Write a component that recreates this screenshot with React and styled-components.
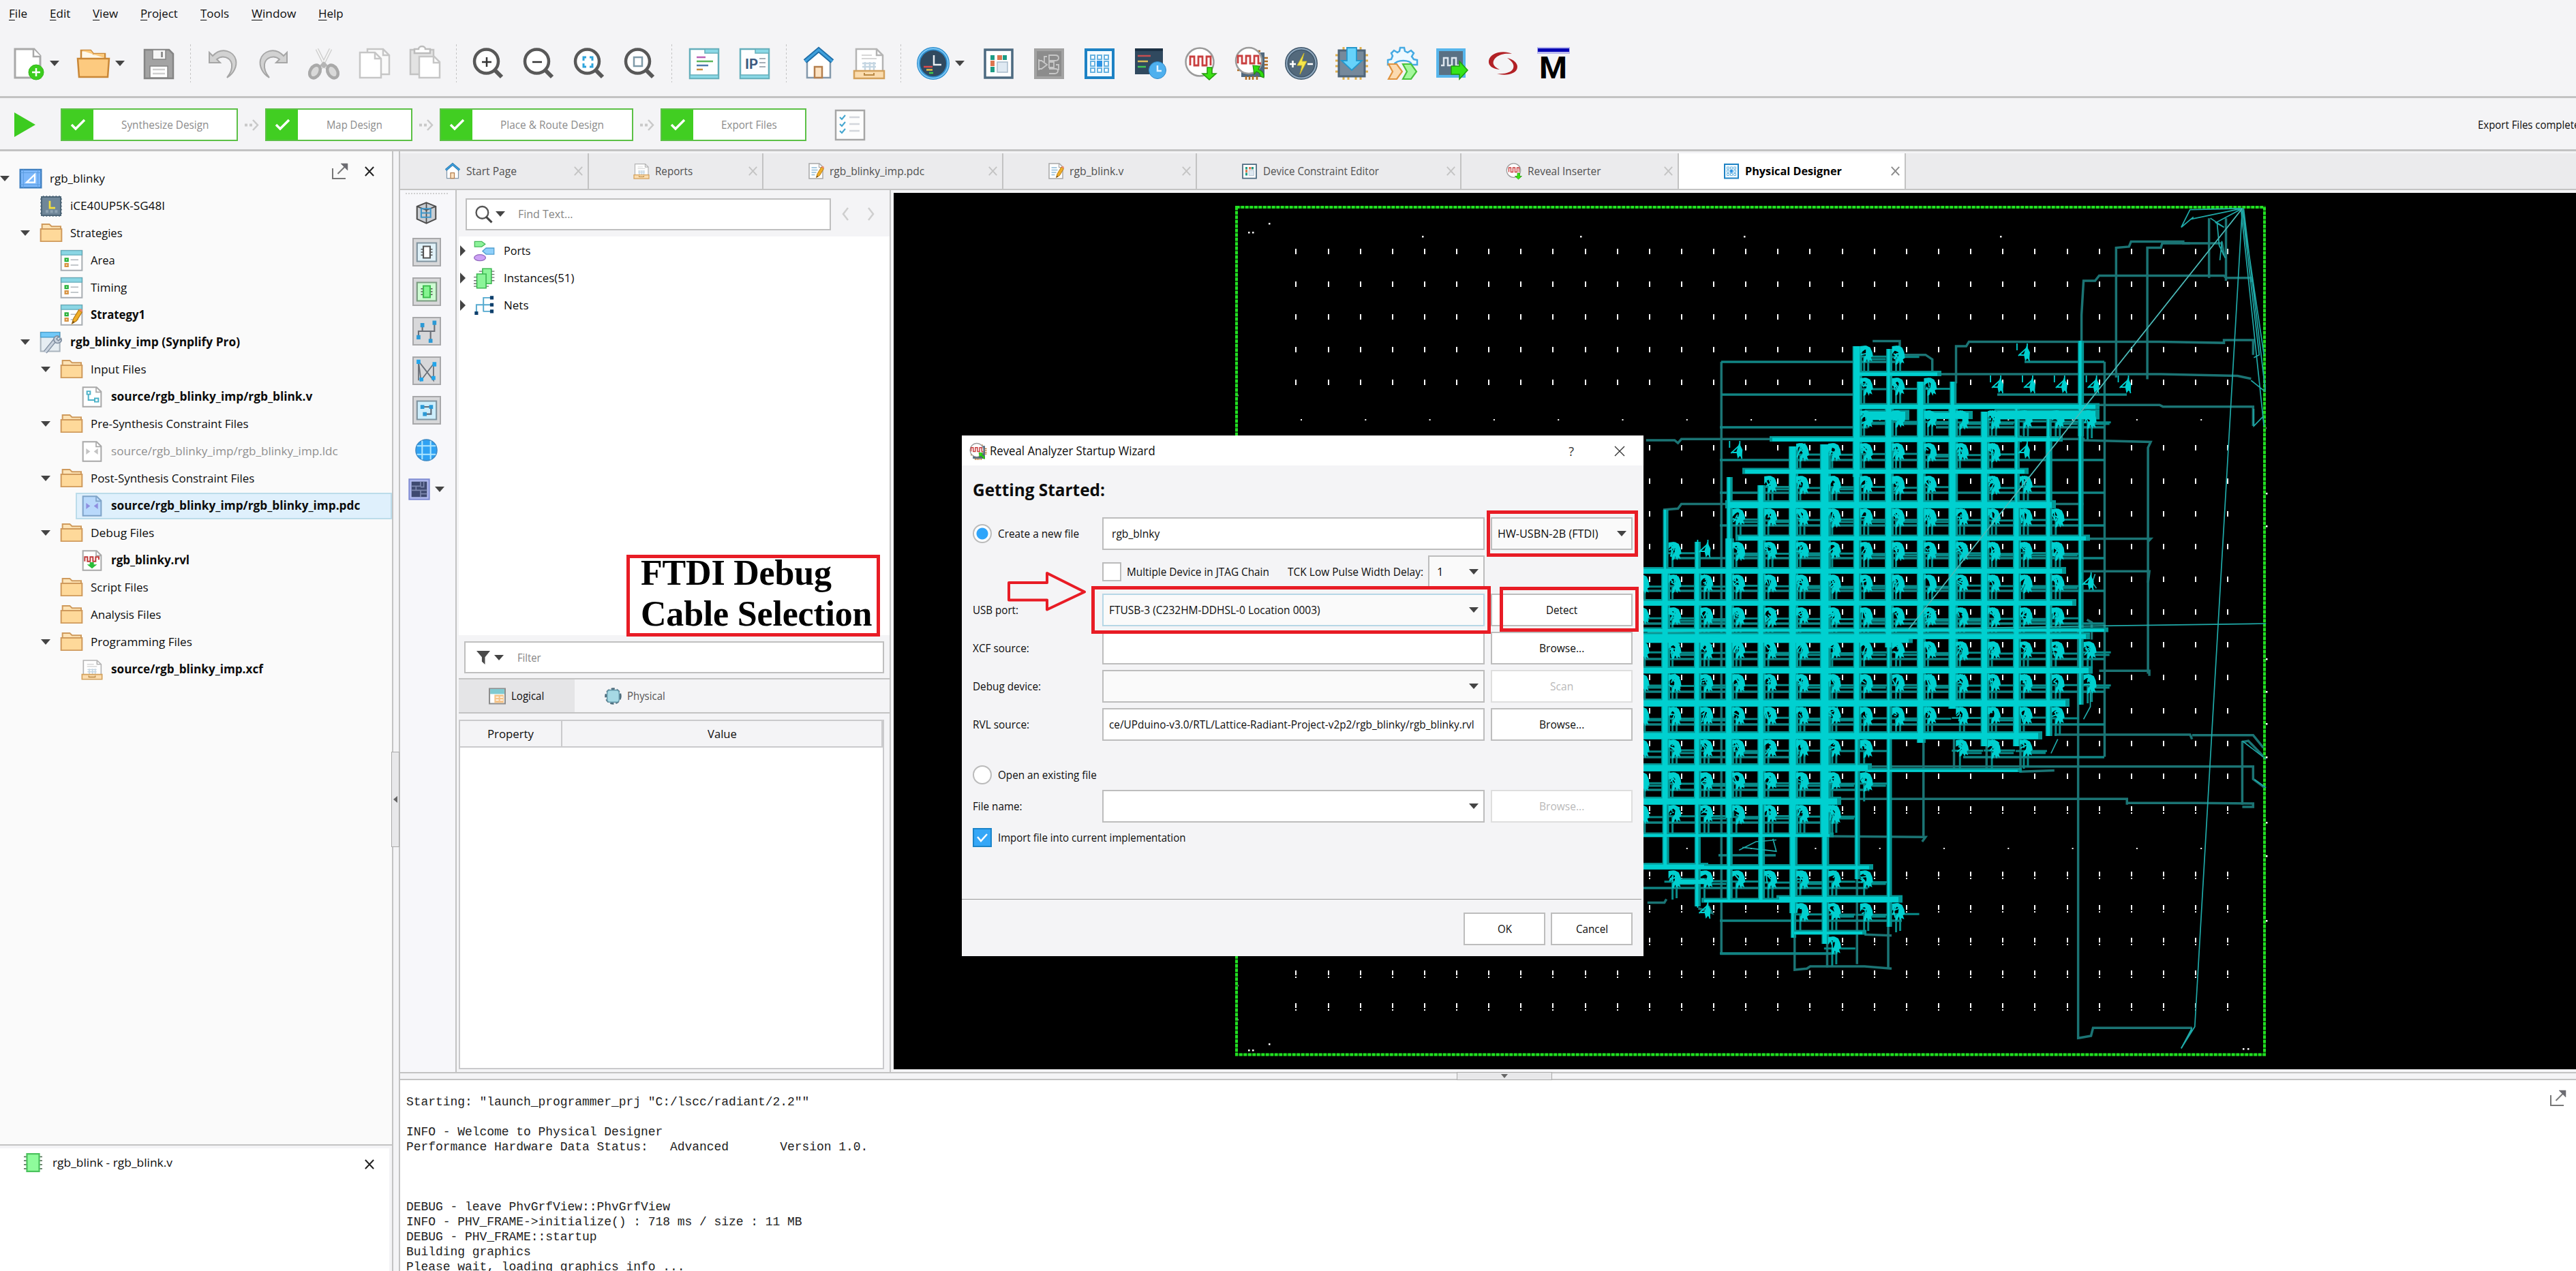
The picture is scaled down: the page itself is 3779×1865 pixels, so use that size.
import React, { useLayoutEffect, useRef, useState } from "react";
import styled, { createGlobalStyle, css } from "styled-components";

const LINE = "#c3c3c3";
const PANEL = "#f4f4f6";
const RED = "#e81c25";
const CYAN = "#00d0d0";
const DIM = "#1b7474";

const Global = createGlobalStyle`
  *, *::before, *::after { box-sizing: border-box; }
  body { margin: 0; background: ${PANEL}; font-family: "Open Sans", "Noto Sans", sans-serif; font-size: 16px; color: #111; }
`;

/* ---------- text ---------- */

const TextBox = styled.span`
  display: inline-block;
  flex: none;
  white-space: pre;
  text-align: left;
  line-height: 1.25;
  width: ${(p) => (p.$w ? `${p.$w}px` : "auto")};
  font-size: ${(p) => p.$size || 16.5}px;
  font-weight: ${(p) => (p.$bold ? 700 : 400)};
  color: ${(p) => p.$color || "#0c0c0c"};
`;

const TextRun = styled.span`
  display: inline-block;
  transform-origin: 0 50%;
  ${(p) => p.$mnemonic && css`
    &::first-letter { text-decoration: underline; text-underline-offset: 3px; }
  `}
`;

/* Condenses the run so that the label fills the width it is given. */
function Label({ w, size, bold, color, mnemonic, children }) {
  const ref = useRef(null);
  const [scale, setScale] = useState(1);
  useLayoutEffect(() => {
    if (w) setScale(w / ref.current.offsetWidth);
  }, [w, children]);
  return (
    <TextBox $w={w} $size={size} $bold={bold} $color={color}>
      <TextRun ref={ref} $mnemonic={mnemonic} style={{ transform: `scaleX(${scale})` }}>
        {children}
      </TextRun>
    </TextBox>
  );
}

const Caret = styled.i`
  flex: none;
  width: 0;
  height: 0;
  border-left: 7.5px solid transparent;
  border-right: 7.5px solid transparent;
  border-top: 8px solid #444;
  ${(p) => p.$right && css`
    border-left: 8px solid #444;
    border-right: 0;
    border-top: 8px solid transparent;
    border-bottom: 8px solid transparent;
  `}
`;

/* ---------- icons ---------- */

const Svg = styled.svg`
  display: block;
  flex: none;
  overflow: visible;
  width: ${(p) => p.$s || 48}px;
  height: ${(p) => p.$h || p.$s || 48}px;
`;

const wave = "M9 27v-13h6v13h6v-13h6v13h6v-13h6v13";

const art = {
  newDoc: (
    <>
      <path d="M5 3h28l9 10v32H5z" fill="#fff" stroke="#a9a9a9" strokeWidth="3" />
      <path d="M32 3v11h11" fill="#fff" stroke="#a9a9a9" strokeWidth="2.5" />
      <circle cx="36" cy="37" r="11" fill="#3ccd1e" stroke="#35b61b" />
      <path d="M36 31v12M30 37h12" stroke="#fff" strokeWidth="2.5" />
    </>
  ),
  folder: (
    <>
      <path d="M6 18V5h14l4 5h17v10" fill="#fff8e8" stroke="#c98737" strokeWidth="2.5" />
      <path d="M6 5h14l4 5h16v6L22 10z" fill="#fcca7d" />
      <path d="M1 17h46l-2 27H3z" fill="#fdca7f" stroke="#c98737" strokeWidth="2.5" />
    </>
  ),
  save: (
    <>
      <path d="M3 4h36l6 6v36H3z" fill="#a3a3a3" stroke="#858585" strokeWidth="2.5" />
      <path d="M15 4h19v14H15z" fill="#f6f6f6" stroke="#858585" strokeWidth="1.5" />
      <path d="M27 7h3v8h-3z" fill="#8f8f8f" />
      <path d="M11 28h26v17H11z" fill="#fff" stroke="#858585" strokeWidth="1.5" />
      <path d="M15 33h18M15 39h18" stroke="#cfcfcf" strokeWidth="2.5" />
    </>
  ),
  undo: (
    <path d="M4 8v15h16l-5-5c8-7 20-3 22 7 1 8-2 14-7 20 10-6 15-17 13-26C40 6 22-1 9 13z" fill="#d2d2d2" stroke="#a6a6a6" strokeWidth="2" />
  ),
  cut: (
    <>
      <path d="M14 3l14 28M34 3L20 31" stroke="#cfcfcf" strokeWidth="5" />
      <path d="M14 3l14 28M34 3L20 31" stroke="#f6f6f6" strokeWidth="2" />
      <ellipse cx="11" cy="36" rx="7" ry="10" transform="rotate(30 11 36)" fill="#d9d9d9" stroke="#a9a9a9" strokeWidth="4.500" />
      <ellipse cx="37" cy="36" rx="7" ry="10" transform="rotate(-30 37 36)" fill="#d9d9d9" stroke="#a9a9a9" strokeWidth="4.500" />
      <path d="M18 27l6-6 6 6-6 4z" fill="#b5b5b5" />
    </>
  ),
  copy: (
    <>
      <path d="M14 3h23l9 9v28H14z" fill="#fafafa" stroke="#c6c6c6" strokeWidth="2.5" />
      <path d="M3 8h22l9 9v28H3z" fill="#fff" stroke="#c6c6c6" strokeWidth="2.5" />
      <path d="M25 8v9h9M37 3v9h9" fill="none" stroke="#c6c6c6" strokeWidth="2.5" />
    </>
  ),
  paste: (
    <>
      <path d="M3 4h34v36H3z" fill="#e3e3e3" stroke="#c2c2c2" strokeWidth="2.5" />
      <path d="M9 3h6a5 4 0 0 1 10 0h7v6H9z" fill="#fff" stroke="#bcbcbc" strokeWidth="2.5" />
      <path d="M16 14h22l8 8v23H16z" fill="#fff" stroke="#c6c6c6" strokeWidth="2.5" />
      <path d="M37 14v9h9" fill="none" stroke="#c6c6c6" strokeWidth="2.5" />
    </>
  ),
  zoomIn: <path d="M21 15v14M14 22h14" stroke="#333" strokeWidth="2.5" />,
  zoomOut: <path d="M14 22h14" stroke="#333" strokeWidth="2.5" />,
  zoomFit: <path d="M15 20v-5h4M24 15h4v5M28 24v5h-4M19 29h-4v-5" fill="none" stroke="#2ea4dc" strokeWidth="3" />,
  zoomSel: <path d="M15 15h12v13H15z" fill="#fff" stroke="#7f9aa8" strokeWidth="2.5" />,
  source: (
    <>
      <path d="M3 3h42v43H3z" fill="#fdfeff" stroke="#65aebb" strokeWidth="2.5" />
      <path d="M25 3h20v6H25zM3 41h42v5H3z" fill="#8ad8e6" stroke="#65aebb" strokeWidth="1.5" />
      <path d="M13 15h13" stroke="#bb62b4" strokeWidth="2.5" />
      <path d="M13 21h24" stroke="#5bb559" strokeWidth="2.5" />
      <path d="M13 27h17" stroke="#4e79ad" strokeWidth="2.5" />
      <path d="M13 33h9" stroke="#c98c3c" strokeWidth="2.5" />
    </>
  ),
  ip: (
    <>
      <path d="M3 3h42v43H3z" fill="#fdfeff" stroke="#65aebb" strokeWidth="2.5" />
      <path d="M25 3h20v6H25zM3 41h42v5H3z" fill="#8ad8e6" stroke="#65aebb" strokeWidth="1.5" />
      <text x="10" y="32" fontFamily="Roboto, sans-serif" fontWeight="700" fontSize="21" fill="#3c5a80" textLength="19" lengthAdjust="spacingAndGlyphs">IP</text>
      <path d="M31 17h9M31 23h9M31 29h9" stroke="#a5aeb6" strokeWidth="2.2" />
    </>
  ),
  home: (
    <>
      <path d="M7 20L24 5l17 15v25H7z" fill="#fff" stroke="#8398ab" strokeWidth="2.5" />
      <path d="M18 29h11v16H18z" fill="#fde3c3" stroke="#b57f4e" strokeWidth="2.5" />
      <path d="M4 21L24 4l20 17" fill="none" stroke="#1f6ea8" strokeWidth="7" />
      <path d="M4 21L24 4l20 17" fill="none" stroke="#3fa0dc" strokeWidth="3.5" />
    </>
  ),
  report: (
    <>
      <path d="M5 3h30l9 9v26H5z" fill="#fff" stroke="#b4b4b4" strokeWidth="2.5" />
      <path d="M35 3v9h9" fill="none" stroke="#b4b4b4" strokeWidth="2.5" />
      <path d="M13 12h15M13 17h22" stroke="#d7d7d7" strokeWidth="2" />
      <path d="M14 24h20M14 29h20M18 22v12M25 22v12M31 22v12" stroke="#c5d6e2" strokeWidth="2.5" />
      <path d="M2 35h44v11H2z" fill="#fbdcae" stroke="#d3a15c" strokeWidth="2.5" />
      <path d="M17 38v3h14v-3" fill="none" stroke="#b98945" strokeWidth="2" />
    </>
  ),
  clock: (
    <>
      <circle cx="24" cy="24" r="21.5" fill="#30495f" stroke="#2b8bcb" strokeWidth="5" />
      <circle cx="24" cy="24" r="21.8" fill="none" stroke="#7cc7f5" strokeWidth="2" />
      <path d="M25 12v14h11" fill="none" stroke="#e9eef2" strokeWidth="2.5" />
      <path d="M10 29h13" stroke="#de4b4b" strokeWidth="2.5" />
      <path d="M14 33.500h9" stroke="#e8c34b" strokeWidth="2.5" />
      <path d="M18 38h6" stroke="#3fce4b" strokeWidth="2.5" />
    </>
  ),
  constraint: (
    <>
      <path d="M4 4h40v41H4z" fill="#fff" stroke="#4c6a80" strokeWidth="3.500" />
      <path d="M12 12h6v7h-6zM30 12h6v7h-6zM12 29h6v8h-6z" fill="#1f9c85" />
      <path d="M22 12h7v7h-7zM12 20h6v8h-6z" fill="#dd7650" />
      <path d="M22 22h15v15H22z" fill="#dfe9f2" stroke="#a9bccb" strokeWidth="1.500" />
    </>
  ),
  netlist: (
    <>
      <path d="M4 4h40v41H4z" fill="#8c8c8c" stroke="#a2a2a2" strokeWidth="4" />
      <path d="M9 20h4l8 6-8 6H9M9 18v16M24 12h9q5 0 5 4t-5 4h-9zM24 22h7v8h-7zM24 32h9q4 0 4 3t-4 4h-9M34 26h4v8M21 14h-4v10" fill="none" stroke="#c7c7c7" strokeWidth="1.800" />
    </>
  ),
  physical: (
    <>
      <path d="M4 4h40v41H4z" fill="#f4fbff" stroke="#1d82c4" strokeWidth="4" />
      <path d="M11 12h6v6h-6zM21 12h6v6h-6zM31 12h6v6h-6zM11 21h6v7h-6zM31 21h6v7h-6zM11 31h6v6h-6zM21 31h6v6h-6zM31 31h6v6h-6z" fill="#fff" stroke="#67b2e0" strokeWidth="2" />
      <path d="M20 20h8v9h-8z" fill="#2e93e3" />
    </>
  ),
  timing: (
    <>
      <path d="M2 2h41v38H2z" fill="#30495f" />
      <path d="M2 2h41v4H2z" fill="#1c3144" />
      <path d="M6 13h19" stroke="#c74f52" strokeWidth="2.500" />
      <path d="M6 21h15" stroke="#d9bc58" strokeWidth="2.500" />
      <path d="M6 29h12" stroke="#41c657" strokeWidth="2.500" />
      <circle cx="35" cy="34" r="12.500" fill="#4fb0ee" stroke="#2d88c9" />
      <path d="M35 27v8h6" fill="none" stroke="#e5f4ff" strokeWidth="2.500" />
    </>
  ),
  inserter: (
    <>
      <circle cx="23" cy="22" r="20.500" fill="#fff" stroke="#9b9b9b" strokeWidth="2.500" />
      <path d={wave} fill="none" stroke="#c94040" strokeWidth="2.800" />
      <path d="M34 30h7v9h6L37 48 27 39h7z" fill="#3ce215" stroke="#239a0d" strokeWidth="1.500" />
    </>
  ),
  analyzer: (
    <>
      <path d="M35 8h9v36H10v-12" fill="#51697e" />
      <path d="M34 6h4M44 16h5M44 21h5M44 26h5M44 31h5M4 34h7M17 43v5M22 43v5M27 43v5M33 43v5" stroke="#b06a1e" strokeWidth="2.500" />
      <circle cx="21" cy="20" r="19" fill="#fff" stroke="#9b9b9b" strokeWidth="2.500" />
      <path d="M5 24v-11h6v11h6v-11h6v11h6v-11h6v11h4" fill="none" stroke="#c94040" strokeWidth="2.800" />
      <path d="M27 27l10 1-2 5c6 2 9 6 8 12l-5-2c0-4-2-6-6-7l-3 4z" fill="#2fdc11" stroke="#1f8d0c" strokeWidth="1.200" />
    </>
  ),
  power: (
    <>
      <circle cx="24" cy="24" r="21.500" fill="#53697c" stroke="#3f566a" strokeWidth="5" />
      <circle cx="24" cy="24" r="21.500" fill="none" stroke="#91aac0" strokeWidth="2" />
      <path d="M28 9L18 27h7l-3 13 10-19h-7z" fill="#f6e64c" stroke="#c9b62c" />
      <path d="M7 25h9M11.500 20v10M33 25h8" stroke="#fff" strokeWidth="2.500" />
    </>
  ),
  program: (
    <>
      <path d="M12 0v48M19 0v48M30 0v48M37 0v48M0 12h48M0 20h48M0 28h48M0 36h48" stroke="#e0b04d" strokeWidth="3" />
      <path d="M5 5h38v38H5z" fill="#76899b" stroke="#4f6579" strokeWidth="3" />
      <path d="M17 1h14v19h8L24 34 9 20h8z" fill="#66d3fb" stroke="#2497cc" strokeWidth="1.800" />
    </>
  ),
  gears: (
    <>
      <path d="M21 1h6l1 5 4 2 5-3 4 4-3 5 3 4 5 1v7h-8c-2-8-22-8-26 0H3v-7l5-1 2-5-2-4 4-4 5 3 3-2z" fill="#eef9ff" stroke="#45aae3" strokeWidth="2.500" />
      <path d="M4 25h12l8 11-8 11H4l6-11z" fill="#fbdab0" stroke="#e0933f" strokeWidth="2.200" />
      <path d="M25 25h12l8 11-8 11H25l6-11z" fill="#a5f79d" stroke="#48c23d" strokeWidth="2.200" />
    </>
  ),
  simulate: (
    <>
      <path d="M2 4h39v39H2z" fill="#5a7184" stroke="#57b6ec" strokeWidth="4" />
      <path d="M7 27h4v-11h6v11h6v-11h6v11h5" fill="none" stroke="#dfe7ee" strokeWidth="2.500" />
      <path d="M22 28h12v-7l12 13-12 13v-7H22z" fill="#36e41a" stroke="#219c0e" strokeWidth="1.500" />
    </>
  ),
  swirl: (
    <>
      <path d="M37 10C25 4 5 8 3 20c-1 8 6 12 16 13C8 28 7 21 14 15c6-5 14-6 23-5z" fill="#b22126" />
      <path d="M30 16c10 2 15 8 15 13 0 11-18 14-30 10 12 1 22-2 24-8 2-6-3-11-9-15z" fill="#b22126" />
    </>
  ),
  modelsim: (
    <>
      <path d="M0 0h48v10H0z" fill="#b9b9ee" />
      <path d="M1 2h46v5H1z" fill="#0505b4" />
      <text x="3" y="46" fontFamily="Roboto, Arial, sans-serif" fontWeight="700" fontSize="45" fill="#000" textLength="41" lengthAdjust="spacingAndGlyphs">M</text>
    </>
  ),
  checklist: (
    <>
      <path d="M3 3h42v43H3z" fill="#fdfdfd" stroke="#a6a6a6" strokeWidth="2.500" />
      <path d="M9 13l3 3 5-6M9 23l3 3 5-6M9 33l3 3 5-6" fill="none" stroke="#42a5cf" strokeWidth="2" />
      <path d="M23 13h15M23 23h15M23 33h15" stroke="#d3d6dc" strokeWidth="2.500" />
    </>
  ),
  page: (
    <>
      <path d="M4 2h30l10 10v34H4z" fill="#fff" stroke="#a8a8a8" strokeWidth="3" />
      <path d="M33 2v11h11" fill="none" stroke="#a8a8a8" strokeWidth="2.500" />
    </>
  ),
  project: (
    <>
      <path d="M1 3h46v41H1z" fill="#7db8fb" stroke="#3f7fc0" strokeWidth="3.500" />
      <path d="M8 3v41M40 3v41M1 10h46M1 37h46" stroke="#5a9be0" strokeWidth="1.500" />
      <path d="M33 14v18H15z" fill="none" stroke="#fff" strokeWidth="3.500" />
    </>
  ),
  device: (
    <>
      <path d="M7 0v48M14 0v48M21 0v48M28 0v48M35 0v48M42 0v48M0 8h48M0 16h48M0 24h48M0 32h48M0 40h48" stroke="#64798a" strokeWidth="2.500" />
      <path d="M3 3h42v42H3z" fill="#6f8698" stroke="#4d6577" strokeWidth="3" />
      <path d="M21 12v16h12" fill="none" stroke="#f3df3d" strokeWidth="4" />
      <path d="M12 33h6v6h-6zM22 33h6v6h-6zM32 33h6v6h-6z" fill="#8fa4b3" />
    </>
  ),
  dir: (
    <>
      <path d="M4 16V3h16l5 5h20v10" fill="#fde3b5" stroke="#cf9a5c" strokeWidth="3" />
      <path d="M1 14h46v28H1z" fill="#fed99a" stroke="#cf9a5c" strokeWidth="3" />
    </>
  ),
  strategy: (
    <>
      <path d="M1 1h46v45H1z" fill="#fff" stroke="#a8adb2" strokeWidth="3" />
      <path d="M1 1h46v10H1z" fill="#8bd6e4" stroke="#64abb9" strokeWidth="2" />
      <path d="M10 19h6v6h-6z" fill="#fff" stroke="#28b13a" strokeWidth="3.500" />
      <path d="M10 31h6v6h-6z" fill="#fff" stroke="#d89342" strokeWidth="3.500" />
      <path d="M22 22h17M22 34h17" stroke="#b0b6bb" strokeWidth="2.500" />
    </>
  ),
  pencil: (
    <>
      <path d="M25 43l3-11L40 12l7 5-12 20z" fill="#f0ae28" stroke="#b97c14" strokeWidth="2" />
      <path d="M40 12l7 5 1-5-5-3z" fill="#ee8a6e" />
      <path d="M25 43l2-6 4 3z" fill="#6a4a18" />
    </>
  ),
  impl: (
    <>
      <path d="M1 1h42v43H1z" fill="#e6edf2" stroke="#a9b4bd" strokeWidth="3" />
      <path d="M1 1h42v11H1z" fill="#72c9f8" stroke="#4a9fcd" strokeWidth="2" />
      <path d="M11 46l22-28" stroke="#7f8ea0" strokeWidth="9" />
      <path d="M11 46l22-28" stroke="#cbd4df" strokeWidth="5" />
      <path d="M31 21c-4-8 4-14 10-11l-5 6 4 4 6-5c3 8-6 13-13 9z" fill="#cbd4df" stroke="#7f8ea0" strokeWidth="2.500" />
    </>
  ),
  verilog: <path d="M13 11h7v7h-7zM30 27h8v8h-8zM16 19v12h13" fill="none" stroke="#4bb2c8" strokeWidth="3" />,
  constr: <path d="M11 17v14l9-7zM37 17v14l-9-7z" fill="#c4c4c4" />,
  debug: (
    <>
      <path d="M8 26v-10h6v10h6v-10h6v10h6v-10h7v6" fill="none" stroke="#c03a3a" strokeWidth="3" />
      <path d="M19 28h9v5h7L24 42 13 33h6z" fill="#2bbd3a" />
    </>
  ),
  cube: (
    <>
      <path d="M24 2l20 8v27L24 46 4 37V10z" fill="#c9cdd2" stroke="#4d4d4d" strokeWidth="3" />
      <path d="M4 10l20 8 20-8M24 2v44" fill="none" stroke="#4d4d4d" strokeWidth="2.500" />
      <path d="M13 15h20v18H13zM13 24h20" fill="none" stroke="#3d95c8" strokeWidth="3" />
    </>
  ),
  globe: (
    <>
      <circle cx="24" cy="24" r="22.500" fill="#2fa2f3" stroke="#3c8cc9" strokeWidth="2.500" />
      <path d="M15 4v40M33 4v40M4 15h40M4 33h40" stroke="#aee6ff" strokeWidth="3" fill="none" />
    </>
  ),
  floor: (
    <>
      <path d="M2 2h44v44H2z" fill="#b3bcf0" stroke="#7f8bd2" strokeWidth="3" />
      <path d="M7 7h34v34H7z" fill="#3f4a70" />
      <path d="M7 17h20V7M17 17v9M27 26v15M7 26h34M34 7v12H27M27 34h14" fill="none" stroke="#7e88ae" strokeWidth="2.500" />
    </>
  ),
  ports: (
    <>
      <path d="M2 2h16l8 6-8 6H2z" fill="#8df29a" stroke="#43b858" strokeWidth="2" />
      <path d="M46 17H28l-8 7 8 7h18z" fill="#8fd0fa" stroke="#4f9ed0" strokeWidth="2" />
      <ellipse cx="14" cy="39" rx="13" ry="7" fill="#cda1f5" stroke="#9168bd" strokeWidth="2" />
    </>
  ),
  instances: (
    <>
      <path d="M12 8h35M12 15h35M12 22h35M12 29h35M0 21h34M0 29h34M0 36h34M0 42h34" stroke="#6f6f6f" strokeWidth="2" />
      <path d="M20 2h20v34H20z" fill="#8cf599" stroke="#3cb751" strokeWidth="2.500" />
      <path d="M7 14h21v32H7z" fill="#8cf599" stroke="#3cb751" strokeWidth="2.500" />
    </>
  ),
  nets: (
    <>
      <path d="M6 40V22h34M22 38V6h18M22 37h18" fill="none" stroke="#54a9cf" strokeWidth="3" />
      <path d="M37 2h8v8h-8zM37 18h8v8h-8zM37 33h8v8h-8zM2 37h8v8H2z" fill="#0e3f6c" />
    </>
  ),
  chip: (
    <>
      <path d="M0 9h48M0 19h48M0 29h48M0 39h48" stroke="#5e7a62" strokeWidth="3" />
      <path d="M8 2h32v44H8z" fill="#8efc9b" stroke="#4cc25e" strokeWidth="4" />
    </>
  ),
  grid: (
    <>
      <path d="M2 3h44v42H2z" fill="#fff" stroke="#8d8d8d" strokeWidth="4" />
      <path d="M4 4h40v14H4z" fill="#7fcad1" />
      <path d="M16 20h26v23H16z" fill="#f5c48a" />
      <path d="M20 27h8M32 27h8M20 35h8M32 35h8" stroke="#fff" strokeWidth="3" />
    </>
  ),
  physChip: (
    <>
      <circle cx="24" cy="24" r="19" fill="none" stroke="#4c6a7a" strokeWidth="9" strokeDasharray="9 5" />
      <rect x="7" y="7" width="34" height="34" rx="8" fill="#a6d9e4" stroke="#6699aa" strokeWidth="3" />
    </>
  ),
  popout: (
    <>
      <path d="M2 16v30h38" fill="none" stroke="#777" strokeWidth="4" />
      <path d="M17 32L38 11" stroke="#777" strokeWidth="4" />
      <path d="M26 2h20v20z" fill="#6c6c72" stroke="#6c6c72" />
    </>
  ),
  close: <path d="M3 3l42 42M45 3L3 45" stroke="currentColor" strokeWidth="7" />,
  thinClose: <path d="M3 3l42 42M45 3L3 45" stroke="#333" strokeWidth="4" />,
  funnel: <path d="M0 0h48L30 22v26l-11-10V22z" fill="#4a4a4a" />,
  lens: (
    <>
      <circle cx="20" cy="19" r="17" fill="none" stroke="#555" strokeWidth="4.500" />
      <path d="M31 31l16 16" stroke="#444" strokeWidth="6" />
    </>
  ),
};

const zoomBody = (
  <>
    <circle cx="20.500" cy="21" r="17.500" fill="#fff" stroke="#585858" strokeWidth="4.500" />
    <path d="M33 34l10 10" stroke="#585858" strokeWidth="6" />
  </>
);

function Icon({ name, s = 48, h, flip, tone }) {
  return (
    <Svg $s={s} $h={h} viewBox="0 0 48 48" preserveAspectRatio="none" color={tone || "#222"}>
      <g transform={flip ? "translate(48 0) scale(-1 1)" : undefined}>
        {name.startsWith("zoom") && zoomBody}
        {name.startsWith("doc:") ? (
          <>
            {art.page}
            {art[name.slice(4)]}
          </>
        ) : (
          art[name]
        )}
      </g>
    </Svg>
  );
}

/* ---------- frame ---------- */

const Screen = styled.div`
  position: relative;
  width: 3779px;
  height: 1865px;
  overflow: hidden;
  background: ${PANEL};
  display: flex;
  flex-direction: column;
`;

const MenuBar = styled.nav`
  height: 40px;
  flex: none;
  display: flex;
  align-items: center;
  padding-left: 13px;
  gap: 33px;
`;

const ToolBar = styled.div`
  height: 104px;
  flex: none;
  display: flex;
  align-items: center;
  padding: 5px 0 0 4px;
  border-bottom: 3px solid ${LINE};
`;

const ToolSlot = styled.div`
  flex: none;
  display: flex;
  align-items: center;
  gap: 8px;
  padding-left: 13px;
  width: ${(p) => (p.$menu ? 96 : 74)}px;
`;

const ToolDivider = styled.div`
  flex: none;
  height: 56px;
  width: 20px;
  background: repeating-linear-gradient(#c4c4c4 0 3px, transparent 3px 6px) 9px 0 / 1px 100% no-repeat;
`;

const FlowBar = styled.div`
  height: 78px;
  flex: none;
  display: flex;
  align-items: center;
  padding: 3px 0 0 21px;
  border-bottom: 3px solid ${LINE};
`;

const Play = styled.i`
  width: 0;
  height: 0;
  border-left: 31px solid #3ccb20;
  border-top: 18px solid transparent;
  border-bottom: 18px solid transparent;
  margin-right: 37px;
`;

const Step = styled.div`
  flex: none;
  display: flex;
  width: ${(p) => p.$w}px;
  height: 48px;
  border: 2.5px solid #5cc046;
  background: #fff;
`;

const StepMark = styled.div`
  width: 46px;
  flex: none;
  display: grid;
  place-items: center;
  background: #41ce22;
`;

const StepName = styled.div`
  flex: 1;
  display: grid;
  place-items: center;
`;

const StepArrow = styled.div`
  width: 40px;
  display: grid;
  place-items: center;
`;

const FlowStatus = styled.div`
  margin-left: auto;
  width: 144px;
  overflow: hidden;
`;

const Body = styled.div`
  flex: 1;
  min-height: 0;
  display: flex;
`;

/* ---------- project tree ---------- */

const LeftColumn = styled.aside`
  position: relative;
  width: 577px;
  flex: none;
  display: flex;
  flex-direction: column;
  border-right: 2px solid ${LINE};
`;

const ProjectTree = styled.div`
  height: 1459px;
  flex: none;
  padding-top: 20px;
  background: #fafafa;
  border-bottom: 2px solid ${LINE};
`;

const TreeRow = styled.div`
  height: 40px;
  display: flex;
  align-items: center;
  padding-left: ${(p) => p.$level * 30}px;
`;

const TreeArrow = styled.div`
  width: 29px;
  flex: none;
  display: flex;
  margin-left: ${(p) => (p.$root ? -1 : 0)}px;
`;

const TreeCell = styled.div`
  flex: 1;
  height: 39px;
  display: flex;
  align-items: center;
  gap: 12px;
  ${(p) => p.$selected && css`
    margin-left: -8px;
    padding-left: 6px;
    background: #dff0fc;
    border: 2px solid #bcdcea;
  `}
`;

const PanelTools = styled.div`
  position: absolute;
  top: ${(p) => p.$top}px;
  right: 26px;
  display: flex;
  align-items: center;
  gap: 24px;
`;

const OutlinePanel = styled.div`
  flex: 1;
  margin: 4px 4px 0 0;
  background: #fff;
  padding: 6px 0 0 35px;
`;

const OutlineRow = styled.div`
  display: flex;
  align-items: center;
  gap: 15px;
  height: 30px;
`;

const Splitter = styled.div`
  position: relative;
  width: 8px;
  flex: none;
`;

const SplitHandle = styled.div`
  position: absolute;
  display: grid;
  place-items: center;
  background: #e8e8ea;
  border: 1px solid #aaa;
  ${(p) => p.$vertical
    ? css`left: -3px; top: 881px; width: 12px; height: 140px;`
    : css`left: 1550px; top: -2px; width: 140px; height: 12px;`}
`;

const HandleArrow = styled.i`
  width: 0;
  height: 0;
  border: 5px solid transparent;
  ${(p) => p.$left ? css`border-right: 6px solid #666; border-left: 0;` : css`border-top: 6px solid #666; border-bottom: 0;`}
`;

/* ---------- editor area ---------- */

const MainColumn = styled.main`
  flex: 1;
  min-width: 0;
  display: flex;
  flex-direction: column;
  border-left: 2px solid ${LINE};
`;

const TabBar = styled.div`
  flex: none;
  margin-top: 3px;
  height: 54px;
  display: flex;
  background: #ebebed;
  border-bottom: 2px solid ${LINE};
`;

const Tab = styled.div`
  flex: none;
  width: ${(p) => p.$w}px;
  display: flex;
  align-items: center;
  gap: 8px;
  padding: 0 7px 0 65px;
  border-right: 2px solid ${LINE};
  background: ${(p) => (p.$active ? "#fff" : "#ebebed")};
`;

const TabClose = styled.div`
  margin-left: auto;
`;

const Workspace = styled.div`
  height: 1294px;
  flex: none;
  display: flex;
`;

const SideTools = styled.div`
  width: 83px;
  flex: none;
  background: #f7f7fa;
  border-right: 2px solid ${LINE};
  display: flex;
  flex-direction: column;
  align-items: center;
  padding: 4px 4px 0 0;
  &::before {
    content: "";
    height: 3px;
    width: 62px;
    margin-bottom: -3px;
    border-top: 2px dotted #cfcfcf;
  }
`;

const SideSlot = styled.div`
  height: 58px;
  flex: none;
  width: 62px;
  display: flex;
  gap: 7px;
  align-items: center;
  justify-content: center;
  ${(p) => p.$menu && css`justify-content: flex-start; padding-left: 4px;`}
`;

const SideButton = styled.div`
  width: 42px;
  height: 42px;
  border: 2px solid #a8a8aa;
  background: #d8d8da;
  display: grid;
  place-items: center;
`;

const Navigator = styled.section`
  width: 637px;
  flex: none;
  display: flex;
  flex-direction: column;
  border-right: 2px solid ${LINE};
`;

const SearchRow = styled.div`
  height: 68px;
  flex: none;
  display: flex;
  align-items: center;
  padding: 2px 0 0 13px;
`;

const SearchBox = styled.div`
  width: ${(p) => p.$w}px;
  height: 47px;
  border: 2px solid #bfbfbf;
  background: #fff;
  display: flex;
  align-items: center;
  padding-left: ${(p) => p.$pad || 12}px;
  gap: ${(p) => p.$gap || 5}px;
`;

const SearchHint = styled.div`
  margin-left: 14px;
`;

const HistoryArrows = styled.div`
  display: flex;
  gap: 26px;
  margin-left: 16px;
`;

const ObjectTree = styled.div`
  height: 585px;
  flex: none;
  margin-left: 3px;
  padding: 1px 0 0 2px;
  background: #fff;
`;

const ObjectRow = styled.div`
  height: 40px;
  display: flex;
  align-items: center;
`;

const ObjectIcon = styled.div`
  width: 44px;
  margin-left: 12px;
`;

const FilterRow = styled.div`
  padding: 9px 0 0 11px;
  height: 63px;
  flex: none;
`;

const ViewTabs = styled.div`
  margin-left: 3px;
  height: 52px;
  flex: none;
  display: flex;
  border-top: 2px solid ${LINE};
  border-bottom: 2px solid ${LINE};
`;

const ViewTab = styled.div`
  width: 170px;
  display: flex;
  align-items: center;
  gap: 8px;
  padding-left: 44px;
  background: ${(p) => (p.$active ? "#e5e5e7" : "transparent")};
`;

const PropertyTable = styled.div`
  flex: 1;
  margin: 9px 8px 4px 3px;
  border: 2px solid #cacacc;
  background: #fff;
`;

const PropertyHead = styled.div`
  display: grid;
  grid-template-columns: 150px 1fr;
  height: 39px;
  background: ${PANEL};
  border-bottom: 2px solid #cacacc;
`;

const PropertyCell = styled.div`
  display: grid;
  place-items: center;
  border-right: 2px solid #cacacc;
`;

const CanvasFrame = styled.div`
  flex: 1;
  padding: 4px 0 4px 4px;
`;

const Canvas = styled.svg`
  display: block;
  width: 2468px;
  height: 1286px;
  background: #000;
`;

const HSplit = styled.div`
  position: relative;
  height: 12px;
  flex: none;
  border-top: 2px solid ${LINE};
  border-bottom: 2px solid ${LINE};
`;

const Log = styled.div`
  position: relative;
  flex: 1;
  overflow: hidden;
  background: #fff;
  padding: 21px 0 0 9px;
`;

const LogText = styled.pre`
  margin: 0;
  font: 18px/22px "Liberation Mono", monospace;
  letter-spacing: -0.05px;
  color: #222;
`;

const LogTools = styled.div`
  position: absolute;
  top: 14px;
  right: 14px;
`;

/* ---------- dialog ---------- */

const Dialog = styled.div`
  position: absolute;
  left: 1411px;
  top: 639px;
  width: 1000px;
  height: 764px;
  background: ${PANEL};
  display: flex;
  flex-direction: column;
`;

const DialogTitle = styled.header`
  height: 44px;
  flex: none;
  display: flex;
  align-items: center;
  gap: 5px;
  padding: 2px 27px 0 11px;
  background: #fff;
`;

const TitleButtons = styled.div`
  margin-left: auto;
  display: flex;
  align-items: center;
  gap: 59px;
`;

const DialogHeading = styled.div`
  height: 76px;
  flex: none;
  display: flex;
  align-items: center;
  padding: 0 0 3px 16px;
`;

const Form = styled.div`
  display: flex;
  flex-direction: column;
  gap: 8px;
  padding: 0 16px;
`;

const FormLine = styled.div`
  height: ${(p) => p.$h || 48}px;
  margin-top: ${(p) => p.$space || 0}px;
  display: grid;
  grid-template-columns: 190px 561px 9px 208px;
  align-items: center;
`;

const FieldLabel = styled.div`
  display: flex;
  align-items: center;
  gap: 9px;
  white-space: nowrap;
`;

const Field = styled.div`
  grid-column: ${(p) => (p.$side ? 4 : 2)};
  height: 48px;
  border: 2.500px solid ${(p) => (p.$focus ? "#b6d7e6" : p.$off ? "#dedede" : "#bdbdbd")};
  background: ${(p) => (p.$combo ? "#fafafa" : "#fff")};
  display: flex;
  align-items: center;
  overflow: hidden;
  justify-content: ${(p) => (p.$button ? "center" : p.$combo || p.$between ? "space-between" : "flex-start")};
  padding: 0 ${(p) => (p.$button ? 0 : 7)}px 0 ${(p) => (p.$button ? 0 : p.$pad || 8)}px;
`;

const OptionLine = styled.div`
  grid-column: 2;
  display: flex;
  align-items: center;
`;

const DelayField = styled(Field)`
  width: 83px;
  padding-left: 11px;
`;

const Space = styled.div`
  flex: none;
  width: ${(p) => p.$w}px;
`;

const Radio = styled.span`
  width: 28px;
  height: 28px;
  flex: none;
  border-radius: 50%;
  border: 2px solid #bbb;
  background: ${(p) => (p.$on ? "radial-gradient(circle, #2fa5fa 0 8px, #fff 9px)" : "#fff")};
`;

const Check = styled.span`
  width: 28px;
  height: 28px;
  flex: none;
  display: grid;
  place-items: center;
  border: 2px solid ${(p) => (p.$on ? "#1b84c9" : "#bbb")};
  background: ${(p) => (p.$on ? "#35a7f7" : "#fff")};
`;

const DialogButtons = styled.footer`
  margin-top: auto;
  height: 84px;
  width: 997px;
  border-top: 1px solid #9a9a9a;
  display: flex;
  justify-content: flex-end;
  gap: 8px;
  padding: 19px 13px 0 0;
`;

const DialogButton = styled.button`
  width: 120px;
  height: 48px;
  padding: 0;
  border: 2.500px solid #bdbdbd;
  background: #fff;
  font-family: inherit;
`;

/* ---------- annotations ---------- */

const Mark = styled.div`
  position: absolute;
  left: ${(p) => p.$x}px;
  top: ${(p) => p.$y}px;
  width: ${(p) => p.$w}px;
  height: ${(p) => p.$h}px;
  border: ${(p) => p.$b || 5.500}px solid ${RED};
`;

const Note = styled(Mark)`
  padding-left: 16px;
  background: #fff;
  font: 700 52px/60px "Liberation Serif", serif;
  letter-spacing: -0.2px;
  color: #000;
  white-space: pre;
`;

const NoteText = styled.div`
  margin-top: -8px;
`;

const ArrowMark = styled.svg`
  position: absolute;
  left: 1476px;
  top: 838px;
  width: 120px;
  height: 60px;
  overflow: visible;
`;

/* ---------- floorplan drawing ---------- */

function makeRandom(seed) {
  let s = seed;
  return () => {
    s = (s * 16807) % 2147483647;
    return s / 2147483647;
  };
}

const colX = (i) => 2442.6 + 46.85 * i;

const range = (a, b) => Array.from({ length: b - a + 1 }, (_, k) => a + k);

const cellRows = [
  { y: 502, cells: [6, 7], light: [11] },
  { y: 549, cells: [6, 7, 8], light: [10, 11, 12, 13, 14] },
  { y: 597, cells: range(6, 13) },
  { y: 645, cells: range(4, 10), light: [2, 11] },
  { y: 693, cells: [...range(3, 8), 10, 11] },
  { y: 741, cells: range(2, 12) },
  { y: 790, cells: [0, ...range(2, 12)], light: [1] },
  { y: 838, cells: range(-1, 12), light: [13] },
  { y: 886, cells: range(-1, 12) },
  { y: 936, cells: range(-1, 13) },
  { y: 984, cells: range(-1, 13) },
  { y: 1032, cells: range(-1, 12) },
  { y: 1080, cells: [...range(-1, 6), 9, 10, 11] },
  { y: 1128, cells: range(-1, 6) },
  { y: 1176, cells: range(-1, 5) },
  { y: 1272, cells: range(0, 6) },
  { y: 1320, cells: range(4, 7), light: [1] },
  { y: 1369, cells: [5] },
];

// [y, x start, x end, width]
const buses = [
  [549, 2725, 2842, 5], [597, 2725, 3074, 6], [610, 2740, 2795, 12], [610, 2825, 2888, 9], [609, 2930, 3074, 12],
  [645, 2600, 3020, 5], [645, 2725, 2960, 7], [692, 2560, 2970, 6], [741, 2535, 3010, 9], [790, 2550, 3060, 6],
  [838, 2411, 3025, 7], [885, 2411, 3040, 7], [925, 2411, 3087, 4], [934, 2411, 3060, 7], [938, 2411, 2800, 10],
  [984, 2411, 3064, 8], [1032, 2411, 3030, 9], [1080, 2411, 2990, 9], [1127, 2411, 2740, 9], [1131, 2740, 2960, 3],
  [1176, 2411, 2695, 9], [1226, 2411, 2684, 4], [1272, 2411, 2500, 7], [1273, 2500, 2742, 5], [1320, 2610, 2785, 8],
  [1322, 2500, 2620, 4], [1369, 2632, 2732, 4], [1294, 2462, 2505, 6],
];

// [column, top, bottom, width]
const trunks = [
  [0, 748, 840, 3], [0, 838, 1180, 8], [0, 1176, 1275, 5], [1, 795, 890, 4], [1, 838, 1180, 6], [1, 1176, 1330, 4],
  [2, 700, 840, 4], [2, 790, 1200, 8], [2, 1180, 1320, 4], [3, 712, 1180, 7], [3, 1176, 1322, 5],
  [4, 655, 1225, 9], [4, 1225, 1340, 7], [4, 1330, 1376, 3], [5, 652, 1225, 11], [5, 1220, 1385, 6],
  [6, 508, 700, 9], [6, 640, 1085, 7], [6, 1080, 1290, 3], [7, 598, 950, 8], [7, 512, 600, 4], [7, 940, 1360, 3],
  [8, 560, 1090, 8], [9, 560, 600, 5], [9, 598, 1040, 9], [10, 604, 1095, 8], [11, 740, 1095, 7], [11, 600, 745, 3],
  [12, 640, 1080, 5], [12, 612, 650, 3], [13, 500, 640, 4], [13, 640, 1034, 3],
];

const dimRows = [
  [531, 2525, 2790], [531, 2970, 3087], [579, 2525, 2725], [579, 2930, 3120], [627, 2523, 2740], [627, 2840, 3087],
  [675, 2523, 3087], [723, 2523, 3087], [771, 2523, 3087], [819, 2455, 3087], [867, 2411, 3087], [915, 2411, 3087],
  [967, 2411, 3087], [1015, 2411, 3087], [1063, 2411, 3087], [1111, 2411, 2640], [1111, 2880, 3087], [1159, 2411, 2740],
  [1207, 2411, 2697], [1255, 2521, 2605], [1303, 2411, 2740], [1351, 2523, 2790], [1399, 2523, 2693],
];

function cellPaths() {
  const rnd = makeRandom(4127);
  let body = "";
  let thin = "";
  let drops = "";
  cellRows.forEach(({ y, cells, light = [] }) => {
    cells.forEach((i) => {
      const x = colX(i) + 13;
      const j = () => (rnd() - 0.5) * 4;
      const top = y + 5;
      body += `M${x + 1} ${top}l6 3 3 7 1 ${7 + j()} -3 2 2 6 -4 -2 -1 4 -3 -6 -2 5 -3 1 1 -8 3 -3 1 -7 -4 -4z`;
      body += `M${x - 8} ${top + 1}l8 -1 2 4 -6 ${3 + j()} -4 ${4 + j()}z`;
      for (let k = 0; k < 7; k += 1) {
        thin += `M${x - 8 + rnd() * 14} ${top + rnd() * 16}L${x - 7 + rnd() * 17} ${top + 4 + rnd() * 19}`;
      }
      drops += `M${x - 2} ${y + 22}V${y + 48}`;
      if (rnd() > 0.4) drops += `M${x + 4} ${y + 25}V${y + 46}`;
      drops += `M${x - 14} ${y + 22 + j() / 2}h46`;
      if (rnd() > 0.5) drops += `M${x} ${y + 25}h30`;
    });
    light.forEach((i) => {
      const x = colX(i) + (y === 549 ? 21 : 13);
      thin += `M${x - 10} ${y + 20}L${x + 3} ${y + 8}M${x - 8} ${y + 19}h12M${x + 3} ${y + 2}v8l3 18M${x - 12} ${y + 2}v10`;
      body += `M${x + 2} ${y + 5}l5 10 -1 12 -3 -3 -3 4 -2 -10z`;
    });
  });
  return { body, thin, drops };
}

const mesh = cellPaths();

const outerNets = [
  "M1280 775V230L1283 170H1300L1306 161H1490L1493 165H1530V172",
  "M1331 340V112L1350 110 1353 101H1430V104H1487L1490 125",
  "M1377 343V112H1397L1399 104H1440",
  "M1468 165V60M1493 170V60",
  "M1095 350V285H1110L1114 277H1395L1490 279V274H1533V300",
  "M972 276H1012V300H1050L1060 308V335",
  "M948 334H1397L1510 337 1530 342",
  "M1306 388H1395L1400 391H1533V425",
  "M638 450H680L685 455 690 448H1283V450L1382 453 1378 463V860",
  "M665 620V572L685 570 690 562H1283M1378 628L1382 623 1283 623",
  "M1283 680H1380L1378 700M1306 855H1380V864M1288 765L1295 770V800",
  "M749 312V1352H910M1314 312V1006",
  "M1240 967H1440L1443 975M1443 968H1533L1548 990M1517 1090V980L1526 978 1548 1005",
  "M960 1023H1533V1045L1550 1060",
  "M925 1080H1347V1090M1347 1087H1450L1533 1088V1094H1517",
  "M1275 780V1500L1294 1496 1297 1482H1443",
  "M995 1000V1378M1047 970V1145M1095 985H1110M949 1050V1370M905 1330V1376",
  "M638 1144H760L1050 1147 1045 1155M857 1300V1380L875 1378 880 1374H960L1000 1378",
  "M905 1000V1030M1140 960V1030M1092 970V1032M1190 965V1032L1240 1030",
  "M640 1262H665L668 1256M715 1272L735 1280 730 1268M960 1318L1000 1320",
];

const brightNets = [
  "M1517 43L1025 782",
  "M1517 43L1447 1480 1427 1518 1443 1485",
  "M1517 43L1440 45 1427 76 1445 58M1517 43L1478 68 1490 76 1470 60M1517 43L1440 62M1480 70L1483 108 1492 130M1487 100L1484 134",
  "M1517 43L1549 300M1519 43L1551 362M1515 43L1549 425M1517 43L1542 300 1534 305M1530 345L1551 365M1534 395V425L1548 408",
  "M640 787L1025 782 1310 776 1552 772",
  "M1235 1000L1245 975M1283 940L1293 918V890M1300 685L1296 700 1302 710M775 1170L800 1155 830 1152M780 1165L830 1172 825 1150",
  "M1517 978L1552 1010M1535 1046L1552 1060M1443 1482L1427 1518",
];

const tickCols = Array.from({ length: 30 }, (_, i) => 1900.4 + i * 47.13);
const tickRows = Array.from({ length: 24 }, (_, i) => i).filter((i) => i !== 5 && i !== 18);

const strayDots = [
  [1861, 327], [2086, 346], [2318, 346], [2558, 346], [2934, 346], [1831, 340], [1837, 340], [1861, 1531], [1831, 1540],
  [1837, 1540], [3290, 1538], [3297, 1538], [1814, 579], [1814, 1445], [1814, 1495], [3324, 723], [3324, 771],
  [3324, 966], [3324, 1014], [3324, 1061], [3324, 1110], [3324, 1206], [3324, 1255], [3324, 1350], [3322, 627],
];

function Floorplan() {
  return (
    <Canvas viewBox="1311 283 2468 1286">
      <g fill="#fff">
        {tickRows.map((r) =>
          tickCols.map((x, c) => {
            const y = 364.5 + r * 48.15;
            return (
              <g key={`${r}-${c}`}>
                <rect x={Math.round(x)} y={Math.round(y)} width="2" height={r > 16 ? 7 : 8} />
                {r > 16 && <rect x={Math.round(x)} y={Math.round(y) + 9} width="2" height="2" />}
              </g>
            );
          })
        )}
        {[615, 1244].map((y) =>
          range(0, 14).map((i) => <rect key={`${y}-${i}`} x={1908 + i * 94.3} y={y} width="2" height="2" />)
        )}
        {strayDots.map(([x, y]) => <rect key={`${x}-${y}`} x={x} y={y} width="2.500" height="2.500" />)}
      </g>
      <rect x="1814" y="304" width="1508" height="1243.500" fill="none" stroke="#0a5a0a" strokeWidth="4" />
      <rect x="1814" y="304" width="1508" height="1243.500" fill="none" stroke="#22e022" strokeWidth="4" strokeDasharray="4.500 2" />
      <g fill="none" stroke={DIM} strokeWidth="3.500">
        <g transform="translate(1780 270) scale(.995 .8355)">
          {outerNets.map((d) => <path key={d} d={d} vectorEffect="non-scaling-stroke" />)}
        </g>
        {dimRows.map(([y, a, b]) => <path key={`${y}-${a}`} d={`M${a} ${y}H${b}`} stroke="#118584" />)}
        <path d={mesh.drops} stroke="#088a88" strokeWidth="3" />
        {trunks.map(([c, a, b, w]) => (
          <path key={`${c}-${a}-${w}`} d={`M${colX(c) + 1} ${a}V${b}`} stroke="#059694" strokeWidth={w + 5} />
        ))}
        {buses.map(([y, a, b, w]) => (
          <path key={`${y}-${a}-${w}`} d={`M${a - 4} ${y - 1}H${b + 6}`} stroke="#059694" strokeWidth={w + 3} />
        ))}
      </g>
      <g fill="none" stroke="#1fa9a8" strokeWidth="1.700">
        <g transform="translate(1780 270) scale(.995 .8355)">
          {brightNets.map((d) => <path key={d} d={d} vectorEffect="non-scaling-stroke" />)}
        </g>
      </g>
      <g fill="none" stroke={CYAN}>
        {trunks.map(([c, a, b, w]) => (
          <path key={`${c}-${a}-${w}`} d={`M${colX(c)} ${a}V${b}`} strokeWidth={w} />
        ))}
        {buses.map(([y, a, b, w]) => (
          <path key={`${y}-${a}-${w}`} d={`M${a} ${y}H${b}`} strokeWidth={w} />
        ))}
        <path d={mesh.thin} strokeWidth="1.800" />
      </g>
      <path d={mesh.body} fill={CYAN} />
      <path transform="translate(1780 270) scale(.995 .8355)" d="M1517 43L1025 782" stroke="#58b5b3" strokeWidth="1.300" vectorEffect="non-scaling-stroke" />
    </Canvas>
  );
}

/* ---------- data ---------- */

const menus = [["File", 27], ["Edit", 30], ["View", 37], ["Project", 55], ["Tools", 42], ["Window", 65], ["Help", 37]];

const tools = [
  { name: "newDoc", menu: true }, { name: "folder", menu: true }, { name: "save" }, null,
  { name: "undo" }, { name: "undo", flip: true }, { name: "cut" }, { name: "copy" }, { name: "paste" }, null,
  { name: "zoomIn" }, { name: "zoomOut" }, { name: "zoomFit" }, { name: "zoomSel" }, null,
  { name: "source" }, { name: "ip" }, null, { name: "home" }, { name: "report" }, null,
  { name: "clock", menu: true }, { name: "constraint" }, { name: "netlist" }, { name: "physical" }, { name: "timing" },
  { name: "inserter" }, { name: "analyzer" }, { name: "power" }, { name: "program" }, { name: "gears" },
  { name: "simulate" }, { name: "swirl" }, { name: "modelsim" },
];

const steps = [["Synthesize Design", 260, 128], ["Map Design", 216, 82], ["Place & Route Design", 284, 152], ["Export Files", 214, 82]];

const tree = [
  { l: 0, open: true, icon: "project", t: "rgb_blinky", w: 81 },
  { l: 1, icon: "device", t: "iCE40UP5K-SG48I", w: 139 },
  { l: 1, open: true, icon: "dir", t: "Strategies", w: 77 },
  { l: 2, icon: "strategy", t: "Area", w: 36 },
  { l: 2, icon: "strategy", t: "Timing", w: 53 },
  { l: 2, icon: "strategyEdit", t: "Strategy1", w: 80, b: true },
  { l: 1, open: true, icon: "impl", t: "rgb_blinky_imp (Synplify Pro)", w: 249, b: true },
  { l: 2, open: true, icon: "dir", t: "Input Files", w: 81 },
  { l: 3, icon: "doc:verilog", t: "source/rgb_blinky_imp/rgb_blink.v", w: 295, b: true },
  { l: 2, open: true, icon: "dir", t: "Pre-Synthesis Constraint Files", w: 232 },
  { l: 3, icon: "doc:constr", t: "source/rgb_blinky_imp/rgb_blinky_imp.ldc", w: 333, c: "#909090" },
  { l: 2, open: true, icon: "dir", t: "Post-Synthesis Constraint Files", w: 240 },
  { l: 3, icon: "pdc", t: "source/rgb_blinky_imp/rgb_blinky_imp.pdc", w: 365, b: true, sel: true },
  { l: 2, open: true, icon: "dir", t: "Debug Files", w: 93 },
  { l: 3, icon: "doc:debug", t: "rgb_blinky.rvl", w: 115, b: true },
  { l: 2, icon: "dir", t: "Script Files", w: 85 },
  { l: 2, icon: "dir", t: "Analysis Files", w: 103 },
  { l: 2, open: true, icon: "dir", t: "Programming Files", w: 149 },
  { l: 3, icon: "report", t: "source/rgb_blinky_imp.xcf", w: 223, b: true },
];

art.strategyEdit = <>{art.strategy}{art.pencil}</>;
art.editDoc = (
  <>
    {art.page}
    <path d="M11 14h16M11 21h18M11 28h14M11 35h10" stroke="#8fbad8" strokeWidth="3" />
    {art.pencil}
  </>
);
art.pdc = (
  <>
    <path d="M4 2h30l10 10v34H4z" fill="#b9d9fb" stroke="#7fa3c8" strokeWidth="3" />
    <path d="M33 2v11h11" fill="none" stroke="#7fa3c8" strokeWidth="2.500" />
    <path d="M11 17v14l9-7zM37 17v14l-9-7z" fill="#8f8fe0" />
  </>
);

const tabs = [
  { t: "Start Page", icon: "home", w: 277, tw: 74 },
  { t: "Reports", icon: "report", w: 256, tw: 55 },
  { t: "rgb_blinky_imp.pdc", icon: "editDoc", w: 352, tw: 139 },
  { t: "rgb_blink.v", icon: "editDoc", w: 284, tw: 79 },
  { t: "Device Constraint Editor", icon: "constraint", w: 388, tw: 170 },
  { t: "Reveal Inserter", icon: "inserter", w: 319, tw: 108 },
  { t: "Physical Designer", icon: "physical", w: 333, tw: 142, active: true },
];

const sideArt = [
  <>
    <path d="M4 5h40v38H4z" fill="#e0f1f8" stroke="#8094a0" strokeWidth="3" />
    <path d="M12 18h24M12 24h24M12 30h24" stroke="#555" strokeWidth="2" />
    <path d="M17 12h14v24H17z" fill="#fff" stroke="#555" strokeWidth="3" />
  </>,
  <>
    <path d="M4 5h40v38H4z" fill="#cdfbd2" stroke="#7a9c80" strokeWidth="3" />
    <path d="M12 18h24M12 24h24M12 30h24" stroke="#555" strokeWidth="2" />
    <path d="M17 12h14v24H17z" fill="#84f590" stroke="#3dbd4e" strokeWidth="3" />
  </>,
  <>
    <path d="M7 33V24H40V8M15 12v12M32 24v18" fill="none" stroke="#6b7078" strokeWidth="3" />
    <path d="M36 2h8v9h-8zM11 7h8v9h-8zM3 32h8v9H3zM28 40h8v8h-8z" fill="#2c9ad6" />
  </>,
  <>
    <path d="M7 4L38 44V10L12 44 7 4v40" fill="none" stroke="#6b7078" strokeWidth="2.500" />
    <path d="M3 1h8v9H3zM36 6h8v9h-8zM9 38h8v8H9zM34 35h8v8h-8z" fill="#22a4ea" />
  </>,
  <>
    <path d="M4 5h40v38H4z" fill="#cdeefc" stroke="#8094a0" strokeWidth="3" />
    <path d="M15 17h18v15H20" fill="none" stroke="#5d6b78" strokeWidth="3" />
    <path d="M11 13h8v8h-8zM29 13h8v8h-8zM16 28h8v8h-8z" fill="#2c9ad6" />
  </>,
];

const logText = `Starting: "launch_programmer_prj "C:/lscc/radiant/2.2""

INFO - Welcome to Physical Designer
Performance Hardware Data Status:   Advanced       Version 1.0.



DEBUG - leave PhvGrfView::PhvGrfView
INFO - PHV_FRAME->initialize() : 718 ms / size : 11 MB
DEBUG - PHV_FRAME::startup
Building graphics
Please wait, loading graphics info ...`;

/* ---------- views ---------- */

function Toolbar() {
  return (
    <ToolBar>
      {tools.map((tool, i) =>
        tool ? (
          <ToolSlot key={i} $menu={tool.menu}>
            <Icon name={tool.name} flip={tool.flip} />
            {tool.menu && <Caret />}
          </ToolSlot>
        ) : (
          <ToolDivider key={i} />
        )
      )}
    </ToolBar>
  );
}

function Flow() {
  return (
    <FlowBar>
      <Play />
      {steps.map(([name, w, tw], i) => (
        <React.Fragment key={name}>
          {i > 0 && (
            <StepArrow>
              <Svg $s={21} $h={17} viewBox="0 0 21 17">
                <path d="M0 8.500h4M7 8.500h4" stroke="#c9c9c9" strokeWidth="4" />
                <path d="M12 1l7 7.500-7 7.500" fill="none" stroke="#c9c9c9" strokeWidth="2.500" />
              </Svg>
            </StepArrow>
          )}
          <Step $w={w}>
            <StepMark>
              <Svg $s={21} $h={16} viewBox="0 0 21 16">
                <path d="M1 8l6 6L20 1" fill="none" stroke="#fff" strokeWidth="3.500" />
              </Svg>
            </StepMark>
            <StepName>
              <Label w={tw} size={16.5} color="#8c8c8c">{name}</Label>
            </StepName>
          </Step>
        </React.Fragment>
      ))}
      <Space $w={40} />
      <Icon name="checklist" />
      <FlowStatus>
        <Label w={159} size={16}>Export Files completed</Label>
      </FlowStatus>
    </FlowBar>
  );
}

function LeftPanels() {
  return (
    <LeftColumn>
      <ProjectTree>
        {tree.map((n) => (
          <TreeRow key={n.t} $level={n.l}>
            <TreeArrow>{n.open && <Caret />}</TreeArrow>
            <TreeCell $selected={n.sel}>
              <Icon name={n.icon} s={32} h={31} />
              <Label w={n.w} size={17} bold={n.b} color={n.c}>{n.t}</Label>
            </TreeCell>
          </TreeRow>
        ))}
      </ProjectTree>
      <PanelTools $top={17}>
        <Icon name="popout" s={24} />
        <Icon name="close" s={14} h={15} />
      </PanelTools>
      <OutlinePanel>
        <OutlineRow>
          <Icon name="chip" s={27} h={28} />
          <Label w={176} size={17}>rgb_blink - rgb_blink.v</Label>
        </OutlineRow>
      </OutlinePanel>
      <PanelTools $top={1479}>
        <Icon name="close" s={14} h={15} />
      </PanelTools>
    </LeftColumn>
  );
}

function NavigatorPanel() {
  return (
    <Navigator>
      <SearchRow>
        <SearchBox $w={536}>
          <Icon name="lens" s={25} />
          <Caret />
          <SearchHint><Label w={81} size={16} color="#858585">Find Text...</Label></SearchHint>
        </SearchBox>
        <HistoryArrows>
          {["M9 1L2 10l7 9", "M2 1l7 9-7 9"].map((d) => (
            <Svg key={d} $s={11} $h={20} viewBox="0 0 11 20">
              <path d={d} fill="none" stroke="#cfcfcf" strokeWidth="2.500" />
            </Svg>
          ))}
        </HistoryArrows>
      </SearchRow>
      <ObjectTree>
        {[["Ports", "ports", 40], ["Instances(51)", "instances", 103], ["Nets", "nets", 37]].map(([t, icon, w]) => (
          <ObjectRow key={t}>
            <Caret $right />
            <ObjectIcon><Icon name={icon} s={31} /></ObjectIcon>
            <Label w={w} size={17}>{t}</Label>
          </ObjectRow>
        ))}
      </ObjectTree>
      <FilterRow>
        <SearchBox $w={616} $pad={16} $gap={6}>
          <Icon name="funnel" s={20} />
          <Caret />
          <SearchHint><Label w={35} size={16} color="#858585">Filter</Label></SearchHint>
        </SearchBox>
      </FilterRow>
      <ViewTabs>
        <ViewTab $active><Icon name="grid" s={25} /><Label w={48} size={16}>Logical</Label></ViewTab>
        <ViewTab><Icon name="physChip" s={25} /><Label w={56} size={16} color="#555">Physical</Label></ViewTab>
      </ViewTabs>
      <PropertyTable>
        <PropertyHead>
          <PropertyCell><Label w={68} size={17}>Property</Label></PropertyCell>
          <PropertyCell><Label w={43} size={17}>Value</Label></PropertyCell>
        </PropertyHead>
      </PropertyTable>
    </Navigator>
  );
}

function SideBar() {
  return (
    <SideTools>
      <SideSlot><Icon name="cube" s={33} /></SideSlot>
      {sideArt.map((drawing, i) => (
        <SideSlot key={i}>
          <SideButton><Svg $s={34} viewBox="0 0 48 48">{drawing}</Svg></SideButton>
        </SideSlot>
      ))}
      <SideSlot><Icon name="globe" s={33} /></SideSlot>
      <SideSlot $menu><Icon name="floor" s={32} /><Caret /></SideSlot>
    </SideTools>
  );
}

function BrowseField({ text = "Browse...", w = 66, off }) {
  return (
    <Field $side $button $off={off}>
      <Label w={w} color={off ? "#b9b9b9" : undefined}>{text}</Label>
    </Field>
  );
}

function Wizard() {
  return (
    <Dialog>
      <DialogTitle>
        <Icon name="analyzer" s={25} />
        <Label w={243} size={17.5}>Reveal Analyzer Startup Wizard</Label>
        <TitleButtons>
          <Label size={18} color="#333">?</Label>
          <Icon name="thinClose" s={16} />
        </TitleButtons>
      </DialogTitle>
      <DialogHeading><Label w={194} size={24.5} bold>Getting Started:</Label></DialogHeading>
      <Form>
        <FormLine>
          <FieldLabel><Radio $on /><Label w={119}>Create a new file</Label></FieldLabel>
          <Field $pad={12}><Label w={70}>rgb_blnky</Label></Field>
          <Field $side $combo><Label w={147}>HW-USBN-2B (FTDI)</Label><Caret /></Field>
        </FormLine>
        <FormLine>
          <OptionLine>
            <Check />
            <Space $w={8} />
            <Label w={209}>Multiple Device in JTAG Chain</Label>
            <Space $w={27} />
            <Label w={199}>TCK Low Pulse Width Delay:</Label>
            <Space $w={7} />
            <DelayField $combo><Label>1</Label><Caret /></DelayField>
          </OptionLine>
        </FormLine>
        <FormLine>
          <FieldLabel><Label w={67}>USB port:</Label></FieldLabel>
          <Field $combo $focus><Label w={310}>FTUSB-3 (C232HM-DDHSL-0 Location 0003)</Label><Caret /></Field>
          <BrowseField text="Detect" w={46} />
        </FormLine>
        <FormLine>
          <FieldLabel><Label w={83}>XCF source:</Label></FieldLabel>
          <Field />
          <BrowseField />
        </FormLine>
        <FormLine>
          <FieldLabel><Label w={100}>Debug device:</Label></FieldLabel>
          <Field $combo><span /><Caret /></Field>
          <BrowseField text="Scan" w={34} off />
        </FormLine>
        <FormLine>
          <FieldLabel><Label w={83}>RVL source:</Label></FieldLabel>
          <Field><Label w={536}>ce/UPduino-v3.0/RTL/Lattice-Radiant-Project-v2p2/rgb_blinky/rgb_blinky.rvl</Label></Field>
          <BrowseField />
        </FormLine>
        <FormLine $h={28} $space={28}>
          <FieldLabel><Radio /><Label w={145}>Open an existing file</Label></FieldLabel>
        </FormLine>
        <FormLine>
          <FieldLabel><Label w={73}>File name:</Label></FieldLabel>
          <Field $between><span /><Caret /></Field>
          <BrowseField off />
        </FormLine>
        <FormLine $h={28}>
          <FieldLabel>
            <Check $on>
              <Svg $s={16} $h={12} viewBox="0 0 16 12"><path d="M1 5l5 6 9-10" fill="none" stroke="#fff" strokeWidth="2.500" /></Svg>
            </Check>
            <Label w={275}>Import file into current implementation</Label>
          </FieldLabel>
        </FormLine>
      </Form>
      <DialogButtons>
        <DialogButton><Label w={21}>OK</Label></DialogButton>
        <DialogButton><Label w={47}>Cancel</Label></DialogButton>
      </DialogButtons>
    </Dialog>
  );
}

export default function App() {
  return (
    <>
      <Global />
      <Screen>
        <MenuBar>
          {menus.map(([name, w]) => <Label key={name} w={w} size={16.5} mnemonic>{name}</Label>)}
        </MenuBar>
        <Toolbar />
        <Flow />
        <Body>
          <LeftPanels />
          <Splitter>
            <SplitHandle $vertical><HandleArrow $left /></SplitHandle>
          </Splitter>
          <MainColumn>
            <TabBar>
              {tabs.map((tab) => (
                <Tab key={tab.t} $w={tab.w} $active={tab.active}>
                  <Icon name={tab.icon} s={24} />
                  <Label w={tab.tw} size={16} bold={tab.active} color={tab.active ? "#000" : "#505050"}>{tab.t}</Label>
                  <TabClose><Icon name="close" s={13} h={14} tone={tab.active ? "#8a8a8a" : "#c4c4c4"} /></TabClose>
                </Tab>
              ))}
            </TabBar>
            <Workspace>
              <SideBar />
              <NavigatorPanel />
              <CanvasFrame><Floorplan /></CanvasFrame>
            </Workspace>
            <HSplit>
              <SplitHandle><HandleArrow /></SplitHandle>
            </HSplit>
            <Log>
              <LogText>{logText}</LogText>
              <LogTools><Icon name="popout" s={24} /></LogTools>
            </Log>
          </MainColumn>
        </Body>
        <Wizard />
        <Mark $x={2181} $y={749} $w={222} $h={68} />
        <Mark $x={1601} $y={860} $w={586} $h={70} />
        <Mark $x={2200} $y={861} $w={204} $h={66} />
        <ArrowMark viewBox="1476 838 120 60">
          <path d="M1480 855h56v-14l55 27.500-55 26v-14h-56z" fill="none" stroke={RED} strokeWidth="4" strokeLinejoin="round" />
        </ArrowMark>
        <Note $x={919} $y={814} $w={372} $h={120}>
          <NoteText>{"FTDI Debug\nCable Selection"}</NoteText>
        </Note>
      </Screen>
    </>
  );
}
